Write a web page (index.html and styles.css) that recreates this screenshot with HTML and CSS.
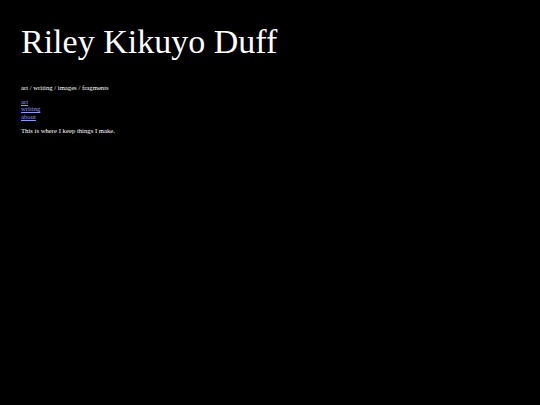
FILE: index.html
```html
<!DOCTYPE html>
<html>
<head>
<meta charset="utf-8">
<link rel="stylesheet" href="styles.css">
</head>
<body>
<div class="page">
  <h1 class="title">Riley Kikuyo Duff</h1>
  <p class="tagline">art / writing / images / fragments</p>
  <nav class="nav">
    <a href="#">art</a>
    <a href="#">writing</a>
    <a href="#">about</a>
  </nav>
  <p class="intro">This is where I keep things I make.</p>
</div>
</body>
</html>
```
FILE: styles.css
```css
html, body {
  margin: 0;
  padding: 0;
  background: #000;
  color: #fff;
  font-family: "Liberation Serif", "Times New Roman", serif;
}
.page {
  padding: 22px 21px;
  font-size: 6.7px;
  line-height: 7.6px;
}
.title {
  margin: 0 0 22px 0;
  font-size: 34px;
  font-weight: normal;
  line-height: 40px;
}
.tagline {
  margin: 0 0 6px 0;
}
.nav {
  display: flex;
  flex-direction: column;
}
.nav a {
  color: #8a9df0;
  text-decoration: underline;
}
.intro {
  margin: 7px 0 0 0;
}
```
